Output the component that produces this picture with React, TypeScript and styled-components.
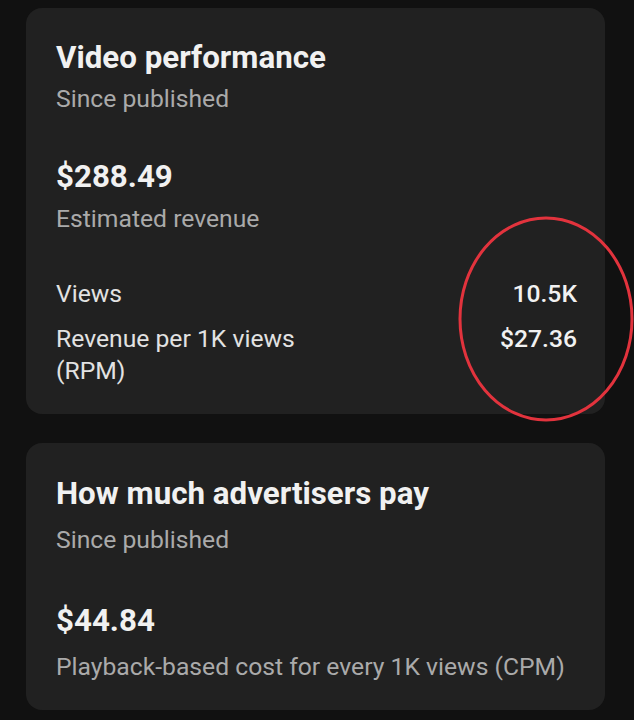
import React from 'react';
import styled, { createGlobalStyle } from 'styled-components';

const GlobalStyle = createGlobalStyle`
  html, body {
    margin: 0;
    padding: 0;
    background: #111111;
  }
  body {
    font-family: Roboto, "Noto Sans", "Liberation Sans", sans-serif;
    -webkit-font-smoothing: antialiased;
  }
`;

const Page = styled.div`
  position: relative;
  width: 634px;
  height: 720px;
  overflow: hidden;
  background: #111111;
  padding: 8px 29px 0 26px;
  box-sizing: border-box;
  display: flex;
  flex-direction: column;
  gap: 29px;
`;

const Card = styled.section<{ $top: number }>`
  background: #212121;
  border-radius: 16px;
  padding: ${(p) => p.$top}px 28px 27px 30px;
  display: flex;
  flex-direction: column;
`;

const Title = styled.h2`
  margin: 0;
  font-size: 31.3px;
  line-height: 36px;
  font-weight: 700;
  color: #f1f1f1;
`;

const Sub = styled.p<{ $gap?: number }>`
  margin: ${(p) => p.$gap ?? 0}px 0 0;
  font-size: 24.7px;
  line-height: 32px;
  font-weight: 400;
  color: #aaaaaa;
`;

const Amount = styled.div<{ $gap: number }>`
  margin-top: ${(p) => p.$gap}px;
  font-size: 31.3px;
  line-height: 36px;
  font-weight: 700;
  color: #f1f1f1;
`;

const Rows = styled.div`
  margin-top: 43px;
  display: flex;
  flex-direction: column;
  gap: 13px;
`;

const Row = styled.div`
  display: flex;
  justify-content: space-between;
  align-items: flex-start;
  font-size: 24.7px;
  line-height: 32px;
`;

const RowLabel = styled.span`
  color: #e2e2e2;
  max-width: 280px;
`;

const RowValue = styled.span`
  color: #f1f1f1;
  font-weight: 500;
`;

const Highlight = styled.svg`
  position: absolute;
  left: 456px;
  top: 215px;
  pointer-events: none;
`;

const App: React.FC = () => {
  return (
    <>
      <GlobalStyle />
      <Page>
        <Card $top={32}>
          <Title>Video performance</Title>
          <Sub $gap={7}>Since published</Sub>
          <Amount $gap={44}>$288.49</Amount>
          <Sub $gap={8}>Estimated revenue</Sub>
          <Rows>
            <Row>
              <RowLabel>Views</RowLabel>
              <RowValue>10.5K</RowValue>
            </Row>
            <Row>
              <RowLabel>Revenue per 1K views (RPM)</RowLabel>
              <RowValue>$27.36</RowValue>
            </Row>
          </Rows>
        </Card>
        <Card $top={33}>
          <Title>How much advertisers pay</Title>
          <Sub $gap={12}>Since published</Sub>
          <Amount $gap={47}>$44.84</Amount>
          <Sub $gap={12}>Playback-based cost for every 1K views (CPM)</Sub>
        </Card>
      </Page>
      <Highlight width="180" height="210" viewBox="0 0 180 210">
        <ellipse cx="90" cy="104" rx="86" ry="101" fill="none" stroke="#e2333d" strokeWidth="3" />
      </Highlight>
    </>
  );
};

export default App;
